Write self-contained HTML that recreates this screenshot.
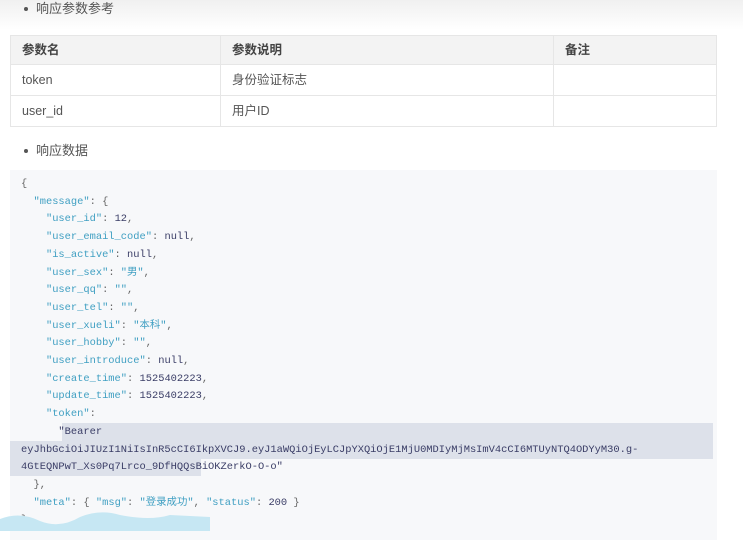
<!DOCTYPE html>
<html><head><meta charset="utf-8"><style>
body{margin:0;width:743px;height:531px;overflow:hidden;background:#fff;font-family:"Liberation Sans","Noto Sans CJK SC",sans-serif;color:#555;position:relative}
.b{position:absolute;left:36px;font-size:13px;color:#555;line-height:18px}
.b:before{content:"";position:absolute;left:-12px;top:7px;width:4px;height:4px;border-radius:50%;background:#555}
table{position:absolute;left:10px;top:35px;width:707px;border-collapse:collapse;font-size:12.5px}
td,th{border:1px solid #e6e6e6;padding:0 11px;text-align:left;height:30px;line-height:16px;vertical-align:middle}
th{background:#f3f3f3;font-weight:bold;color:#444;height:28px}
.code{position:absolute;left:10px;top:170px;width:707px;height:370px;background:#f7f8fa}
pre{margin:0;position:absolute;left:21px;top:176px;font-family:"Liberation Mono","Noto Sans CJK SC",monospace;font-size:10.4px;line-height:17.7px;color:#666}
.k{color:#3f9fc2}.n{color:#3a3d66}
.hl{position:absolute;background:#dde1ea}
</style></head><body>
<div style="position:absolute;left:0;top:0;width:743px;height:30px;background:linear-gradient(#f0f0f0,#fff)"></div>
<div class="b" style="top:0px">响应参数参考</div>
<table><tr><th style="width:187px">参数名</th><th style="width:310px">参数说明</th><th>备注</th></tr>
<tr><td>token</td><td>身份验证标志</td><td></td></tr>
<tr><td>user_id</td><td>用户ID</td><td></td></tr></table>
<div class="b" style="top:142px">响应数据</div>
<div class="code"></div>
<div class="hl" style="left:62px;top:423px;width:651px;height:18px"></div>
<div class="hl" style="left:10px;top:441px;width:703px;height:18px"></div>
<div class="hl" style="left:10px;top:459px;width:191px;height:17px"></div>
<pre>{
  <span class="k">"message"</span>: {
    <span class="k">"user_id"</span>: <span class="n">12</span>,
    <span class="k">"user_email_code"</span>: <span class="n">null</span>,
    <span class="k">"is_active"</span>: <span class="n">null</span>,
    <span class="k">"user_sex"</span>: <span class="k">"男"</span>,
    <span class="k">"user_qq"</span>: <span class="k">""</span>,
    <span class="k">"user_tel"</span>: <span class="k">""</span>,
    <span class="k">"user_xueli"</span>: <span class="k">"本科"</span>,
    <span class="k">"user_hobby"</span>: <span class="k">""</span>,
    <span class="k">"user_introduce"</span>: <span class="n">null</span>,
    <span class="k">"create_time"</span>: <span class="n">1525402223</span>,
    <span class="k">"update_time"</span>: <span class="n">1525402223</span>,
    <span class="k">"token"</span>:
      <span class="n">"Bearer</span>
<span class="n">eyJhbGciOiJIUzI1NiIsInR5cCI6IkpXVCJ9.eyJ1aWQiOjEyLCJpYXQiOjE1MjU0MDIyMjMsImV4cCI6MTUyNTQ4ODYyM30.g-</span>
<span class="n">4GtEQNPwT_Xs0Pq7Lrco_9DfHQQsBiOKZerkO-O-o"</span>
  },
  <span class="k">"meta"</span>: { <span class="k">"msg"</span>: <span class="k">"登录成功"</span>, <span class="k">"status"</span>: <span class="n">200</span> }
}</pre>
<svg style="position:absolute;left:0;top:505px" width="215" height="26"><path d="M0 14 Q20 6 40 16 Q60 24 80 12 Q100 4 120 10 Q150 16 170 10 L210 12 L210 26 L0 26Z" fill="#c6e7f3"/></svg>
</body></html>
